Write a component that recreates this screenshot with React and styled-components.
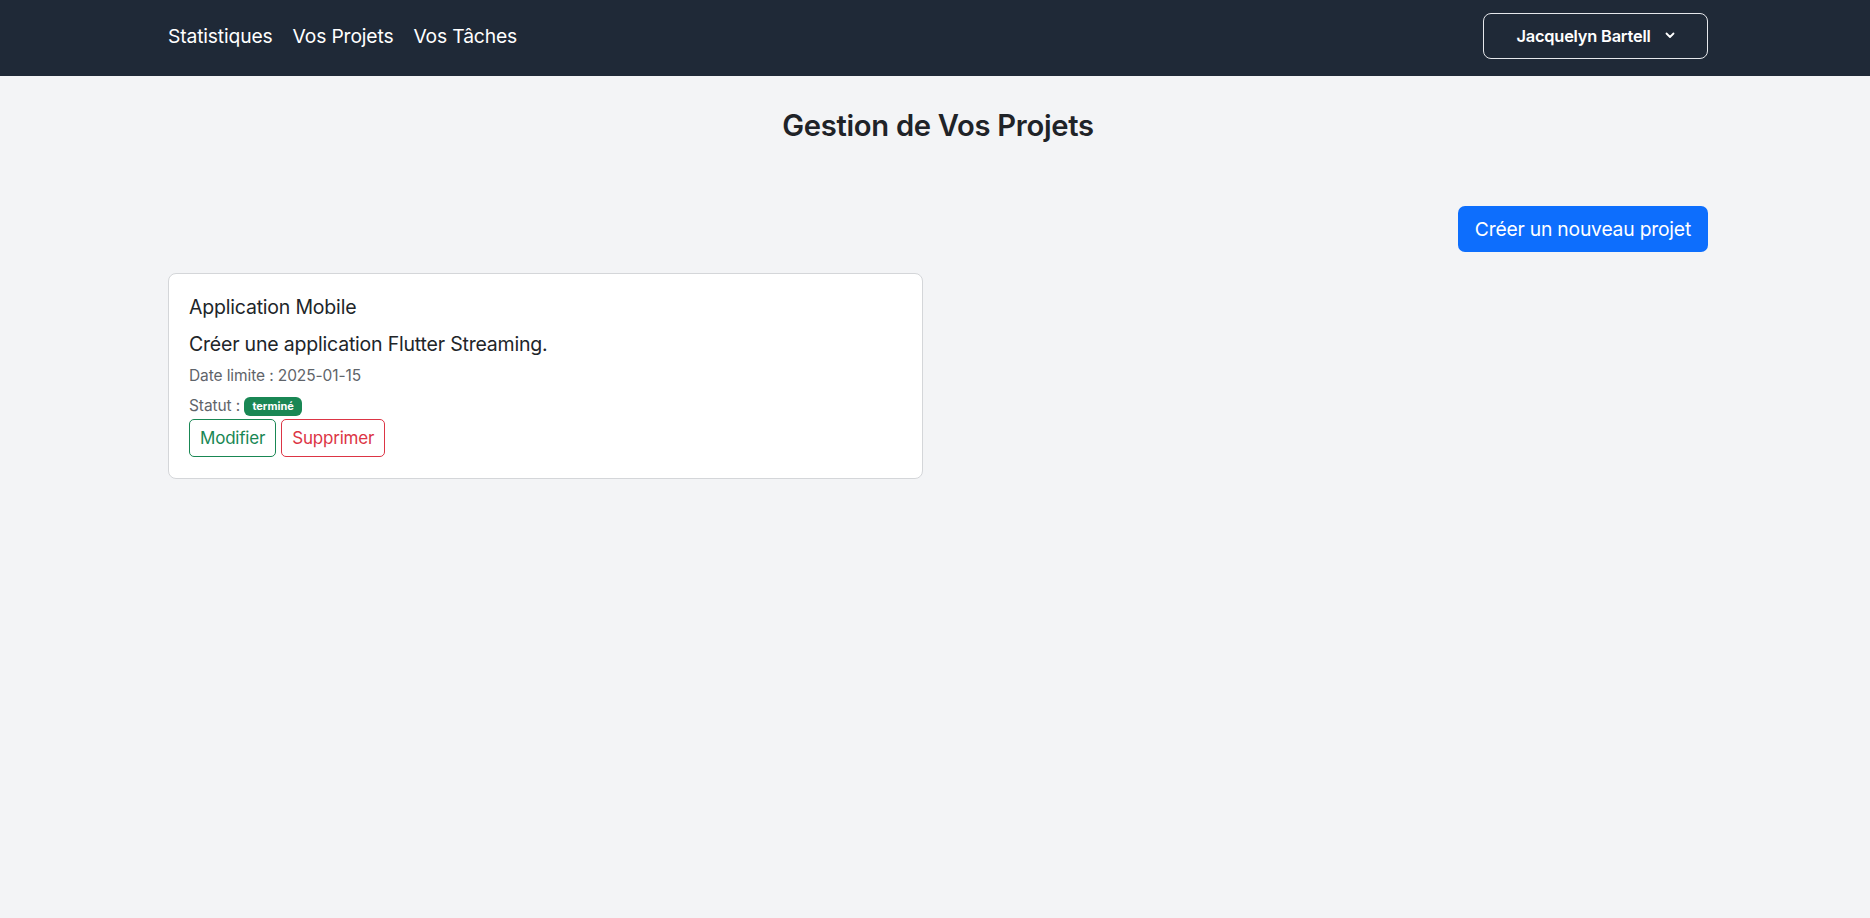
import React from "react";
import styled, { createGlobalStyle } from "styled-components";

const GlobalStyle = createGlobalStyle`
  body {
    margin: 0;
    background-color: #f3f4f6;
    font-family: Inter, "Noto Sans", sans-serif;
    color: #212529;
  }
`;

const Navbar = styled.nav`
  height: 76px;
  background-color: #1f2937;
`;

const Container = styled.div`
  width: 1540px;
  margin: 0 0 0 168px;
`;

const NavInner = styled(Container)`
  height: 100%;
  box-sizing: border-box;
  padding-bottom: 5px;
  display: flex;
  align-items: center;
  justify-content: space-between;
`;

const NavLinks = styled.div`
  display: flex;
  gap: 20px;
`;

const NavLink = styled.a`
  color: #ffffff;
  font-size: 19.3px;
  letter-spacing: -0.15px;
  text-decoration: none;
  cursor: pointer;
`;

const UserButton = styled.button`
  width: 225px;
  height: 46px;
  display: flex;
  align-items: center;
  justify-content: center;
  gap: 14px;
  background: transparent;
  border: 1px solid #e5e7eb;
  border-radius: 8px;
  color: #ffffff;
  font-family: inherit;
  font-size: 16.4px;
  font-weight: 600;
  letter-spacing: -0.2px;
  cursor: pointer;
`;

const Title = styled.h1`
  margin: 32px 0 0;
  text-align: center;
  font-size: 29.2px;
  line-height: 36px;
  font-weight: 600;
  letter-spacing: -0.3px;
  color: #1f2328;
`;

const Toolbar = styled.div`
  display: flex;
  justify-content: flex-end;
  margin-top: 62px;
`;

const PrimaryButton = styled.button`
  height: 46px;
  padding: 0 17px;
  background-color: #0d6efd;
  border: none;
  border-radius: 7px;
  color: #ffffff;
  font-family: inherit;
  font-size: 19.3px;
  letter-spacing: -0.2px;
  cursor: pointer;
`;

const Grid = styled.div`
  display: grid;
  grid-template-columns: 755px;
  margin-top: 21px;
`;

const Card = styled.div`
  background-color: #ffffff;
  border: 1px solid #d4d6d9;
  border-radius: 8px;
  padding: 21px 20px 21px 20px;
`;

const CardTitle = styled.h5`
  margin: 0 0 13px;
  font-size: 19.5px;
  line-height: 24px;
  font-weight: 400;
  letter-spacing: -0.2px;
`;

const CardText = styled.p`
  margin: 0 0 9px;
  font-size: 19.5px;
  line-height: 24px;
  letter-spacing: -0.2px;
`;

const Meta = styled.p`
  margin: 0 0 ${(p) => p.$mb || 0}px;
  font-size: 15.5px;
  line-height: 22px;
  color: #5f646a;
  letter-spacing: -0.1px;
`;

const Badge = styled.span`
  display: inline-block;
  padding: 0 8px;
  height: 19px;
  line-height: 19px;
  border-radius: 6px;
  background-color: #198754;
  color: #ffffff;
  font-size: 11px;
  font-weight: 700;
  letter-spacing: 0;
  vertical-align: 1px;
`;

const Actions = styled.div`
  display: flex;
  gap: 5px;
  margin-top: 2px;
`;

const OutlineButton = styled.button`
  height: 38px;
  padding: 0 10px;
  background: transparent;
  border: 1px solid ${(p) => p.$color};
  border-radius: 5px;
  color: ${(p) => p.$color};
  font-family: inherit;
  font-size: 17px;
  letter-spacing: -0.2px;
  cursor: pointer;
`;

const projects = [
  {
    id: 1,
    name: "Application Mobile",
    description: "Créer une application Flutter Streaming.",
    deadline: "2025-01-15",
    status: "terminé",
  },
];

export default function App() {
  return (
    <>
      <GlobalStyle />
      <Navbar>
        <NavInner>
          <NavLinks>
            <NavLink>Statistiques</NavLink>
            <NavLink>Vos Projets</NavLink>
            <NavLink>Vos Tâches</NavLink>
          </NavLinks>
          <UserButton>
            Jacquelyn Bartell
            <svg width="10" height="7" viewBox="0 0 10 7">
              <path
                d="M1.5 1.5 L5 5 L8.5 1.5"
                fill="none"
                stroke="#ffffff"
                strokeWidth="1.8"
                strokeLinecap="round"
                strokeLinejoin="round"
              />
            </svg>
          </UserButton>
        </NavInner>
      </Navbar>
      <Container>
        <Title>Gestion de Vos Projets</Title>
        <Toolbar>
          <PrimaryButton>Créer un nouveau projet</PrimaryButton>
        </Toolbar>
        <Grid>
          {projects.map((project) => (
            <Card key={project.id}>
              <CardTitle>{project.name}</CardTitle>
              <CardText>{project.description}</CardText>
              <Meta $mb={8}>Date limite : {project.deadline}</Meta>
              <Meta>
                Statut : <Badge>{project.status}</Badge>
              </Meta>
              <Actions>
                <OutlineButton $color="#198754">Modifier</OutlineButton>
                <OutlineButton $color="#dc3545">Supprimer</OutlineButton>
              </Actions>
            </Card>
          ))}
        </Grid>
      </Container>
    </>
  );
}
